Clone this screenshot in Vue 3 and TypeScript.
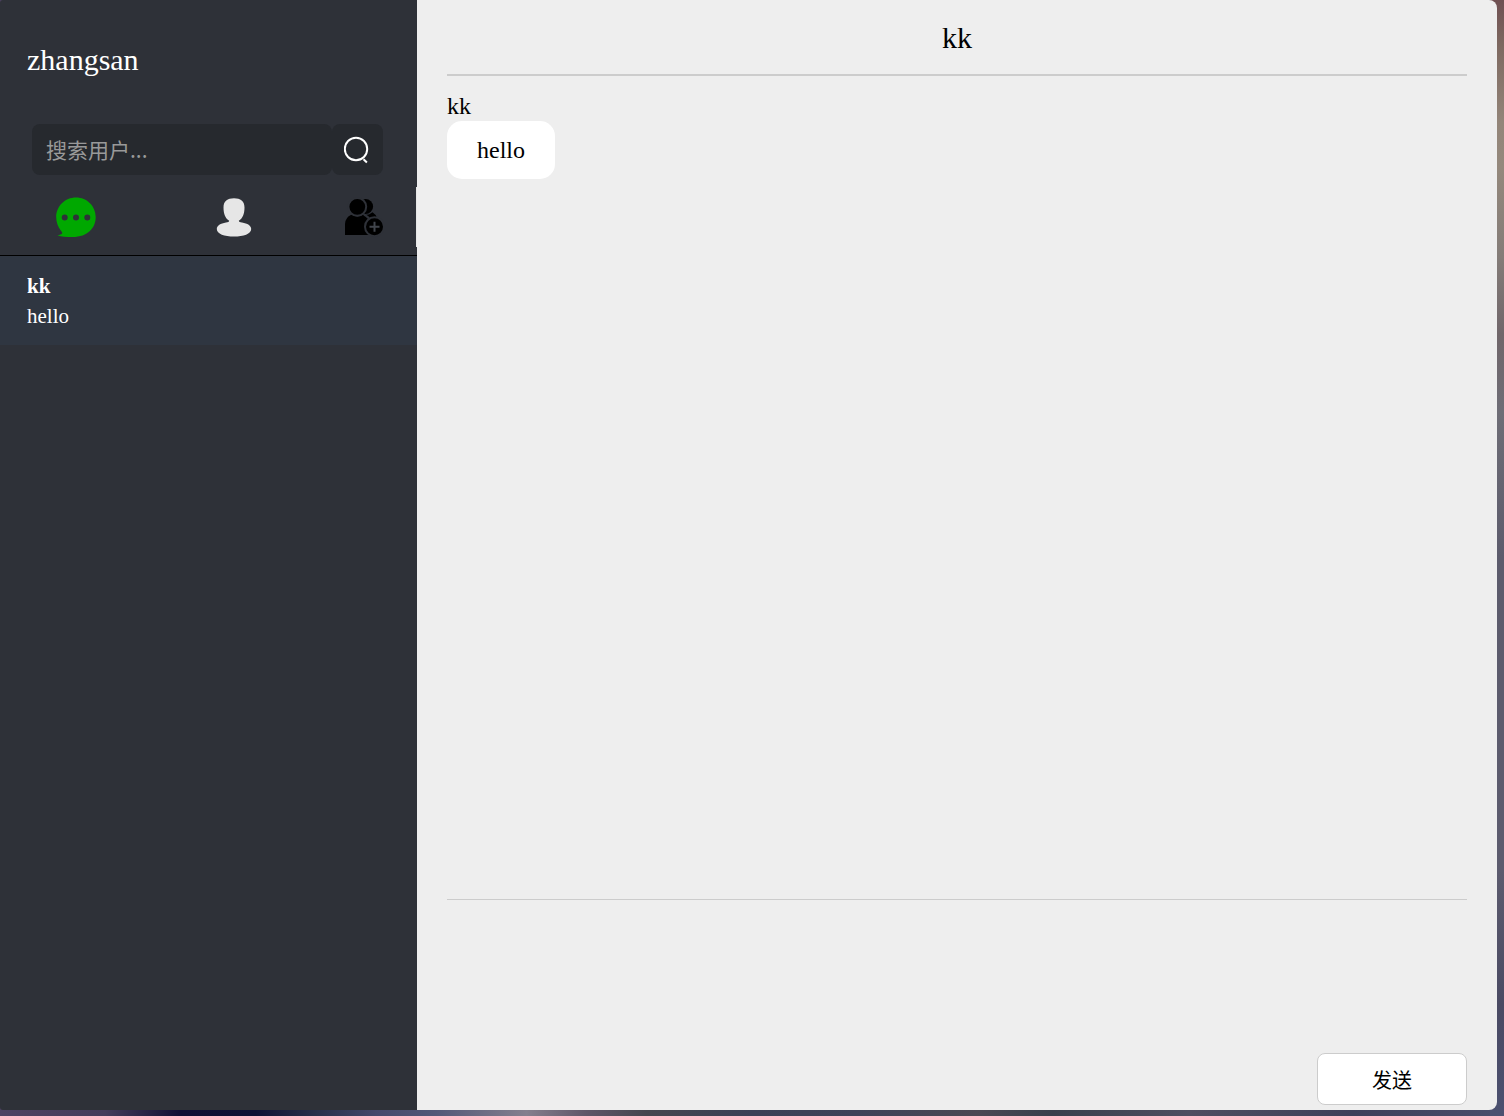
<script setup lang="ts">
import { ref } from 'vue'

interface Contact {
  id: number
  name: string
  preview: string
}

interface Message {
  id: number
  from: string
  text: string
}

const username = 'zhangsan'
const keyword = ref('')
const draft = ref('')
const contacts = ref<Contact[]>([{ id: 1, name: 'kk', preview: 'hello' }])
const active = ref<Contact>(contacts.value[0])
const messages = ref<Message[]>([{ id: 1, from: 'kk', text: 'hello' }])

function send(): void {
  const text = draft.value.trim()
  if (!text) return
  messages.value.push({ id: messages.value.length + 1, from: username, text })
  draft.value = ''
}
</script>

<template>
  <div class="desktop">
    <div class="window">
      <aside class="sidebar">
        <h1 class="username">{{ username }}</h1>
        <form class="search" role="search" @submit.prevent>
          <input v-model="keyword" class="search-input" type="text" aria-label="搜索用户" placeholder="搜索用户..." />
          <button class="search-button" type="submit" aria-label="搜索">
            <svg width="28" height="28" viewBox="0 0 28 28" fill="none" stroke="#fff" stroke-width="2">
              <circle cx="12" cy="13" r="11.2" />
              <path d="M19.500 23.200l3.400 3.200" />
            </svg>
          </button>
        </form>
        <nav class="tabs">
          <button class="tab" type="button" aria-label="聊天">
            <svg width="42" height="42" viewBox="0 0 42 42">
              <path
                fill="#00a800"
                fill-rule="evenodd"
                d="M21 1.500C32 1.500 40.700 10.200 40.700 21S33 41 17.500 41C11.500 41 6.500 40.600 2.500 39.400C5 39 6.700 38.400 7.200 37.300C7.300 36.300 6.600 35.500 5.800 34.500C2.900 31 1.200 26 1.200 21C1.200 10.200 10 1.500 21 1.500ZM9.700 18.400a3 3 0 1 0 0 6a3 3 0 1 0 0-6ZM21 18.400a3 3 0 1 0 0 6a3 3 0 1 0 0-6ZM32.300 18.400a3 3 0 1 0 0 6a3 3 0 1 0 0-6Z"
              />
            </svg>
          </button>
          <button class="tab" type="button" aria-label="联系人">
            <svg width="42" height="42" viewBox="0 0 42 42">
              <path
                fill="#e6e6e6"
                d="M21 2.300C27.500 2.300 31.500 5 31.500 11.500C31.500 18 29.500 22.500 25.800 24.800C26 26 27 26.200 29 26.500C34.500 27.500 38.200 29.500 38.200 33C38.200 38 30.500 40.500 21 40.500S3.800 38 3.800 33C3.800 29.500 7.500 27.500 13 26.500C15 26.200 16 26 16.200 24.800C12.500 22.500 10.500 18 10.500 11.500C10.500 5 14.500 2.300 21 2.300Z"
              />
            </svg>
          </button>
          <button class="tab" type="button" aria-label="添加好友">
            <svg width="42" height="42" viewBox="0 0 42 42">
              <circle cx="23.500" cy="10.500" r="7.600" />
              <path d="M22 19L27 18.500L30.500 16.300Q34 18.500 35 22L26 24Z" />
              <path
                d="M3 39V28Q3.300 21.500 9.300 18.800Q15.300 22 21.300 18.800Q27.300 22.500 28 28V39Z"
              />
              <path d="M22 18.500Q27.500 21.500 29 26" fill="none" stroke="#2e3138" stroke-width="2" />
              <circle cx="15.300" cy="10.800" r="8.900" stroke="#2e3138" stroke-width="2" />
              <circle cx="32.500" cy="30.700" r="9.500" stroke="#2e3138" stroke-width="2" />
              <path d="M27.500 30.700h10M32.500 25.700v10" stroke="#41454c" stroke-width="2" />
            </svg>
          </button>
        </nav>
        <ul class="contacts">
          <li v-for="c in contacts" :key="c.id">
            <button class="contact" type="button" @click="active = c">
              <strong>{{ c.name }}</strong>
              <span>{{ c.preview }}</span>
            </button>
          </li>
        </ul>
      </aside>

      <main class="chat">
        <h2 class="chat-title">{{ active.name }}</h2>
        <section class="messages">
          <article v-for="m in messages" :key="m.id" class="message">
            <div class="sender">{{ m.from }}</div>
            <p class="bubble">{{ m.text }}</p>
          </article>
        </section>
        <form class="composer" @submit.prevent="send">
          <textarea v-model="draft" class="draft" aria-label="消息"></textarea>
          <button class="send" type="submit">发送</button>
        </form>
      </main>
    </div>
  </div>
</template>

<style>
body {
  margin: 0;
}
</style>

<style scoped>
* {
  box-sizing: border-box;
}

.desktop {
  display: flex;
  min-height: 100vh;
  padding: 0 7px 6px 0;
  font-family: "Liberation Serif", "Noto Sans CJK SC", serif;
  background:
    linear-gradient(#6f4f52 0%, #7d6860 4%, #938579 11%, #94887c 15%, #847c78 23%, #70666a 30%, #6e6d76 37%, #5c5b6c 50%, #5c5b6e 78%, #4a4a63 90%, #4b5070 100%) right / 14px 100% no-repeat,
    linear-gradient(90deg, #4e4262 0%, #443c5a 7%, #0e0e34 12%, #0f1235 17%, #29304a 21%, #44486b 25%, #525878 29%, #857f8e 35%, #5f5668 39%, #45464f 43%, #3c4056 50%, #3e4258 57%, #4b4853 65%, #393f4c 70%, #4f4e60 79%, #3e3f5a 90%, #4a4e6c 100%);
}

.window {
  display: flex;
  flex: 1;
  min-width: 0;
  overflow: hidden;
  border-radius: 3px 8px 8px 3px;
}

button,
input,
textarea {
  margin: 0;
  padding: 0;
  border: 0;
  outline: 0;
  font-family: inherit;
}

button {
  cursor: pointer;
}

svg {
  display: block;
}

.sidebar {
  flex: 0 0 417px;
  background: #2e3138;
  color: #fff;
}

.username {
  margin: 0;
  padding: 42px 27px 46px;
  font-size: 30px;
  line-height: 36px;
  font-weight: 400;
}

.search {
  display: flex;
  padding: 0 34px 0 32px;
}

.search-input {
  flex: 1;
  min-width: 0;
  height: 51px;
  padding: 0 14px 2px;
  border-radius: 8px;
  background: #26292e;
  color: #fff;
  font-family: "Noto Sans CJK SC", sans-serif;
  font-size: 21px;
}

.search-input::placeholder {
  color: #999;
  opacity: 1;
}

.search-button {
  display: grid;
  place-items: center;
  width: 51px;
  height: 51px;
  border-radius: 8px;
  background: #26292e;
}

.tabs {
  display: flex;
  justify-content: space-between;
  height: 60px;
  margin-top: 12px;
  padding: 0 32px 0 55px;
  border-right: 1px solid #e6e6e6;
}

.tab {
  display: grid;
  place-items: center;
  width: 42px;
  background: none;
}

.tab:nth-child(2) {
  margin-left: 28px;
}

.contacts {
  margin: 8px 0 0;
  padding: 0;
  border-top: 1px solid #000;
  list-style: none;
}

.contact {
  display: flex;
  flex-direction: column;
  width: 100%;
  padding: 15px 27px 14px;
  background: #2f3641;
  color: #fff;
  font-size: 21px;
  line-height: 30px;
  text-align: left;
}

.chat {
  display: flex;
  flex: 1;
  flex-direction: column;
  min-width: 0;
  padding: 0 30px 5px;
  background: #eee;
  color: #000;
}

.chat-title {
  margin: 0;
  padding: 20px 0 18px;
  border-bottom: 2px solid #ccc;
  font-size: 30px;
  line-height: 36px;
  font-weight: 400;
  text-align: center;
}

.messages {
  flex: 1;
  padding-top: 15px;
  font-size: 24px;
}

.message {
  display: flex;
  flex-direction: column;
  align-items: flex-start;
}

.sender {
  line-height: 30px;
}

.bubble {
  margin: 0;
  padding: 14px 30px;
  border-radius: 15px;
  background: #fff;
  line-height: 30px;
}

.composer {
  display: flex;
  flex-direction: column;
  align-items: flex-end;
  border-top: 1px solid #ccc;
}

.draft {
  width: 100%;
  height: 153px;
  background: none;
  font-size: 24px;
  resize: none;
}

.send {
  width: 150px;
  height: 52px;
  border: 1px solid #ccc;
  border-radius: 8px;
  background: #fff;
  color: #000;
  font-family: "Noto Sans CJK SC", sans-serif;
  font-size: 20px;
}
</style>
